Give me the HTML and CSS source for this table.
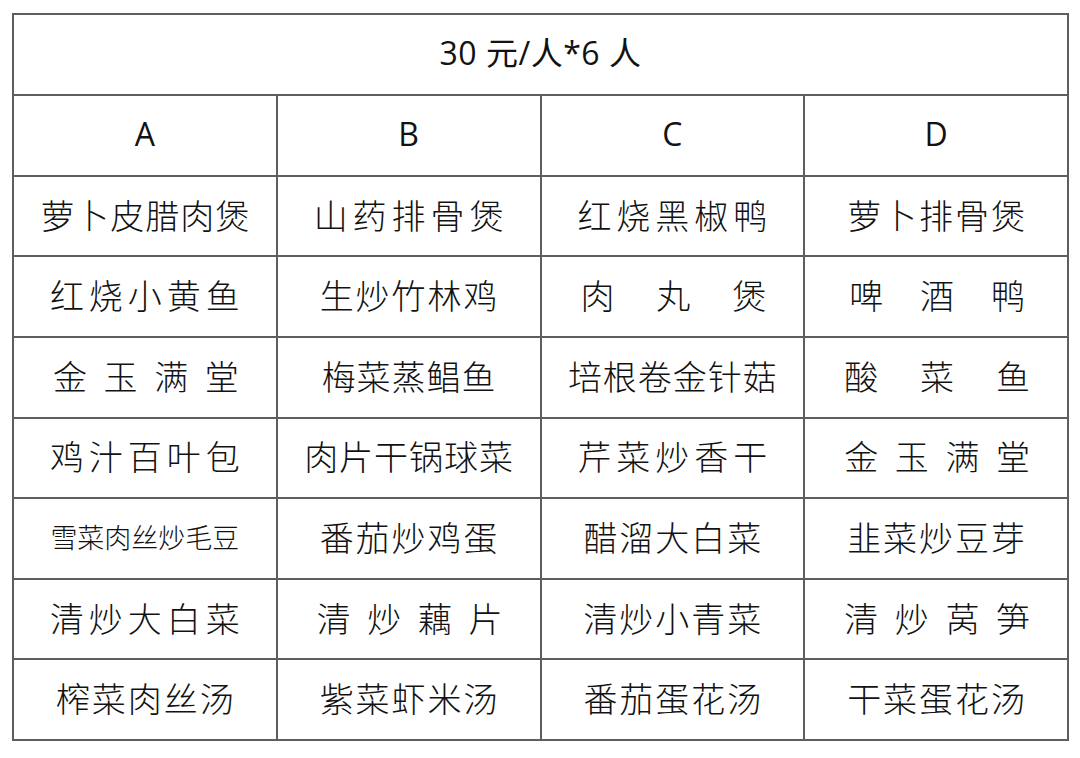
FILE: index.html
```html
<!DOCTYPE html>
<html lang="zh-CN">
<head>
<meta charset="utf-8">
<title>30元/人*6人 菜单</title>
<link rel="stylesheet" href="styles.css">
</head>
<body>
<div class="page">
<table class="menu">
  <tr class="title-row"><td colspan="4" class="title">30 元/人*6 人</td></tr>
  <tr class="head-row"><td class="latin">A</td><td class="latin">B</td><td class="latin">C</td><td class="latin">D</td></tr>
  <tr><td class="six">萝卜皮腊肉煲</td><td class="wide">山药排骨煲</td><td class="wide">红烧黑椒鸭</td><td>萝卜排骨煲</td></tr>
  <tr><td class="wide">红烧小黄鱼</td><td>生炒竹林鸡</td><td><span class="spread">肉丸煲</span></td><td><span class="spread narrow">啤酒鸭</span></td></tr>
  <tr><td><span class="spread">金玉满堂</span></td><td class="tight">梅菜蒸鲳鱼</td><td class="six">培根卷金针菇</td><td><span class="spread">酸菜鱼</span></td></tr>
  <tr><td class="wide">鸡汁百叶包</td><td class="six">肉片干锅球菜</td><td class="wide">芹菜炒香干</td><td><span class="spread">金玉满堂</span></td></tr>
  <tr><td class="seven">雪菜肉丝炒毛豆</td><td>番茄炒鸡蛋</td><td>醋溜大白菜</td><td>韭菜炒豆芽</td></tr>
  <tr><td class="wide">清炒大白菜</td><td><span class="spread">清炒藕片</span></td><td>清炒小青菜</td><td><span class="spread">清炒莴笋</span></td></tr>
  <tr><td>榨菜肉丝汤</td><td>紫菜虾米汤</td><td>番茄蛋花汤</td><td>干菜蛋花汤</td></tr>
</table>
</div>
</body>
</html>
```
FILE: styles.css
```css
html, body {
  margin: 0;
  padding: 0;
  background: #ffffff;
}

.page {
  padding: 13px 0 0 12px;
}

.menu {
  width: 1057px;
  border-collapse: collapse;
  table-layout: fixed;
  font-family: "Noto Sans CJK SC", "Noto Sans", sans-serif;
  font-weight: 300;
  color: #121212;
}

.menu td {
  border: 2px solid #5e5e5e;
  height: 75.6px;
  padding: 0 0 3px 0;
  text-align: center;
  vertical-align: middle;
  font-size: 34px;
  letter-spacing: 2px;
  line-height: 1;
  text-indent: 2px;
  white-space: nowrap;
}

.menu .title-row td {
  height: 76.2px;
}

.menu td.title {
  font-family: "Open Sans", "Noto Sans CJK SC", sans-serif;
  font-weight: 400;
  font-size: 32px;
  letter-spacing: 0.5px;
  text-indent: 0;
}

.menu td.latin {
  font-family: "Open Sans", sans-serif;
  font-weight: 400;
  font-size: 32px;
  letter-spacing: 0;
  text-indent: 0;
}

.menu td.wide {
  letter-spacing: 5px;
  text-indent: 5px;
}

.menu td.tight {
  letter-spacing: 1px;
  text-indent: 1px;
}

.menu td.six {
  letter-spacing: 1px;
  text-indent: 1px;
}

.menu td.seven {
  font-size: 27px;
  letter-spacing: 0;
  text-indent: 0;
}

.spread {
  display: inline-block;
  width: 186px;
  text-align: justify;
  text-align-last: justify;
  letter-spacing: 0;
  text-indent: 0;
  vertical-align: baseline;
}

.spread.narrow {
  width: 176px;
}
```
